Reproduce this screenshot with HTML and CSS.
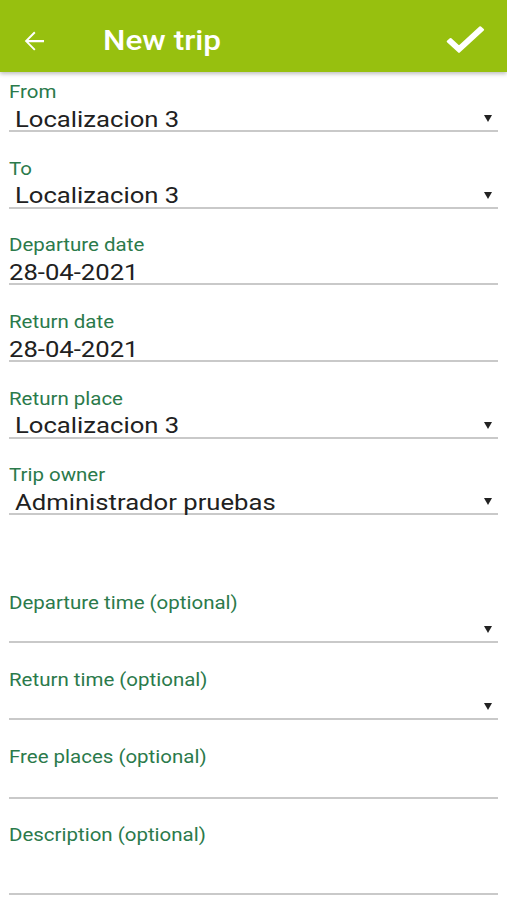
FILE: index.html
```html
<!DOCTYPE html>
<html>

<head>
    <meta charset="utf-8">
    <meta name="viewport" content="width=device-width, initial-scale=1">
    <title>New trip</title>
    <link rel="stylesheet" href="styles.css">
</head>

<body>
    <div class="toolbar">
        <svg class="back" viewBox="0 0 24 24" width="30" height="30"><path fill="#fff" d="M20 11.1H7.6l5.6-5.6-1.1-1.1-7.5 7.6 7.5 7.6 1.1-1.1-5.6-5.6H20z"/></svg>
        <div class="title"><span class="wide">New trip</span></div>
        <svg class="done" viewBox="0 0 24 24" width="48" height="44" preserveAspectRatio="none"><path fill="#fff" d="M9 16.2L4.8 12l-1.4 1.4L9 19 21 7l-1.4-1.4L9 16.2z" stroke="#fff" stroke-width="1.1" stroke-linejoin="round"/></svg>
    </div>

    <div class="form">
        <div class="field">
            <div class="label"><span class="wide">From</span></div>
            <div class="value select"><span class="wide">Localizacion 3</span><span class="caret"></span></div>
        </div>
        <div class="field">
            <div class="label"><span class="wide">To</span></div>
            <div class="value select"><span class="wide">Localizacion 3</span><span class="caret"></span></div>
        </div>
        <div class="field">
            <div class="label"><span class="wide">Departure date</span></div>
            <div class="value"><span class="wide">28-04-2021</span></div>
        </div>
        <div class="field">
            <div class="label"><span class="wide">Return date</span></div>
            <div class="value"><span class="wide">28-04-2021</span></div>
        </div>
        <div class="field">
            <div class="label"><span class="wide">Return place</span></div>
            <div class="value select"><span class="wide">Localizacion 3</span><span class="caret"></span></div>
        </div>
        <div class="field">
            <div class="label"><span class="wide">Trip owner</span></div>
            <div class="value select"><span class="wide">Administrador pruebas</span><span class="caret"></span></div>
        </div>

        <div class="spacer"></div>

        <div class="field">
            <div class="label"><span class="wide">Departure time (optional)</span></div>
            <div class="value select"><span class="caret"></span></div>
        </div>
        <div class="field">
            <div class="label"><span class="wide">Return time (optional)</span></div>
            <div class="value select"><span class="caret"></span></div>
        </div>
        <div class="field">
            <div class="label"><span class="wide">Free places (optional)</span></div>
            <div class="value input"></div>
        </div>
        <div class="field">
            <div class="label"><span class="wide">Description (optional)</span></div>
            <div class="value input tall"></div>
        </div>
    </div>
</body>

</html>
```

FILE: styles.css
```css
html {
    background-color: #ffffff;
}

body {
    margin: 0;
    font-family: Roboto, "Liberation Sans", sans-serif;
    color: #212121;
}

/* the screenshot is a little stretched sideways */
.wide {
    display: inline-block;
    transform: scaleX(1.17);
    transform-origin: left center;
    white-space: nowrap;
}

.toolbar {
    height: 72px;
    box-sizing: border-box;
    padding-top: 9px;
    background-color: #97c00f;
    display: flex;
    align-items: center;
    box-shadow: 0 2px 4px rgba(0, 0, 0, 0.25);
    position: relative;
}

.back {
    margin-left: 19px;
}

.title {
    color: #ffffff;
    font-size: 27px;
    font-weight: 500;
    margin-left: 54px;
    flex: 1;
}

.done {
    margin-right: 18px;
    margin-top: -4px;
}

.form {
    padding: 10px 9px 0 9px;
}

.field {
    margin-bottom: 26.7px;
}

.label {
    color: #2b7a4b;
    font-size: 17.5px;
    line-height: 20px;
}

.value {
    font-size: 22.5px;
    line-height: 26px;
    height: 25px;
    padding-top: 3px;
    border-bottom: 2px solid #c9c9c9;
    display: flex;
    align-items: center;
}

.value .wide {
    transform: scaleX(1.14) translateY(1px);
}

.select {
    padding-left: 6px;
}

.caret {
    margin-left: auto;
    margin-right: 6px;
    margin-top: 2px;
    width: 0;
    height: 0;
    border-left: 4px solid transparent;
    border-right: 4px solid transparent;
    border-top: 7px solid #222222;
}

.input {
    height: 27px;
}

.tall {
    height: 45px;
}

.spacer {
    height: 51px;
}
```
